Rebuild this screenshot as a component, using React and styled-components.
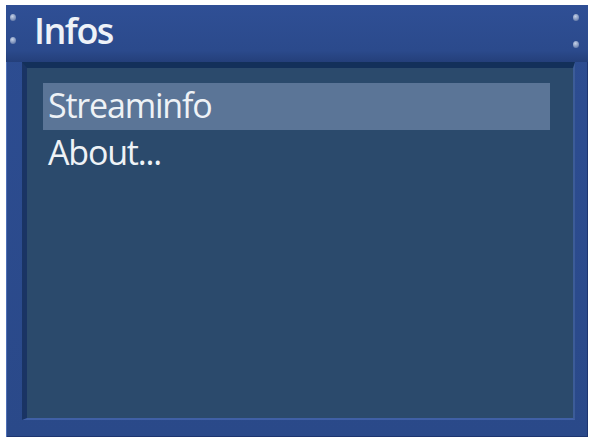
import React from "react";
import styled, { createGlobalStyle } from "styled-components";

const Global = createGlobalStyle`
  html, body { margin: 0; padding: 0; background: #ffffff; }
  body { font-family: "Open Sans", "Noto Sans", sans-serif; }
`;

const Page = styled.div`
  width: 593px;
  height: 440px;
  padding: 5px 5px 3px 6px;
  box-sizing: border-box;
  display: flex;
`;

const Frame = styled.div`
  position: relative;
  flex: 1;
  display: flex;
  flex-direction: column;
  background: linear-gradient(180deg, #2d4d92 0%, #2a4989 100%);
  box-shadow: inset 1px 1px 0 #4e6fb6, inset -1px -1px 0 #1d3570;
`;

const TitleBar = styled.div`
  height: 57px;
  display: flex;
  align-items: center;
  padding-left: 28px;
  background: linear-gradient(180deg, #2f4f95 0%, #2b4a8c 80%, #243f7a 100%);
  box-sizing: border-box;
`;

const Title = styled.h1`
  margin: 0;
  color: #eef2f8;
  font-family: "Open Sans", sans-serif;
  font-weight: 600;
  font-size: 36px;
  letter-spacing: -1.5px;
  line-height: 1;
  transform: translateY(-3px);
`;

const Stud = styled.span`
  position: absolute;
  width: 6px;
  height: 7px;
  border-radius: 50%;
  background: radial-gradient(circle at 40% 35%, #c6d2e8 0%, #8296bd 55%, #4a6298 100%);
  left: ${(p) => p.$left}px;
  top: ${(p) => p.$top}px;
`;

const Body = styled.div`
  flex: 1;
  display: flex;
  padding: 0 13px 17px 16px;
`;

const Panel = styled.div`
  flex: 1;
  background: #2b4a6c;
  border-top: 6px solid #13305a;
  border-left: 5px solid #1a3464;
  border-right: 2px solid #3c5c98;
  border-bottom: 2px solid #4060a6;
  padding: 15px 23px 0 16px;
  display: flex;
  flex-direction: column;
`;

const Item = styled.div`
  height: 47px;
  display: flex;
  align-items: center;
  padding-left: 5px;
  background: ${(p) => (p.$selected ? "#5b7597" : "transparent")};
  color: #eef2f6;
  font-family: "Open Sans", sans-serif;
  font-weight: 500;
  font-size: 34px;
  letter-spacing: -1.2px;
  line-height: 1;
`;

const ItemText = styled.span`
  transform: translateY(-2px);
`;

export default function App() {
  return (
    <>
      <Global />
      <Page>
        <Frame>
          <Stud $left={4} $top={9} />
          <Stud $left={4} $top={32} />
          <Stud $left={567} $top={9} />
          <Stud $left={567} $top={36} />
          <TitleBar>
            <Title>Infos</Title>
          </TitleBar>
          <Body>
            <Panel>
              <Item $selected>
                <ItemText>Streaminfo</ItemText>
              </Item>
              <Item>
                <ItemText>About...</ItemText>
              </Item>
            </Panel>
          </Body>
        </Frame>
      </Page>
    </>
  );
}
